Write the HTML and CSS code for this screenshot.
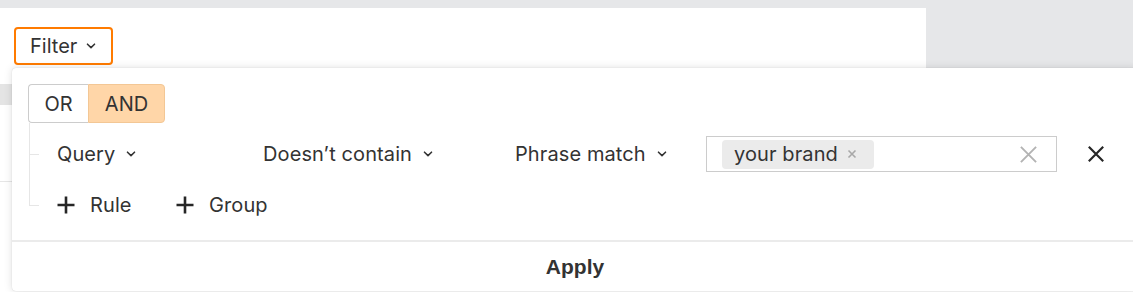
FILE: index.html
```html
<!DOCTYPE html>
<html>
<head>
<meta charset="utf-8">
<link rel="stylesheet" href="styles.css">
</head>
<body>
<div class="topbar">
  <div class="panel">
    <button class="filter-btn">Filter
      <svg class="chev" viewBox="0 0 10 6" width="10" height="6"><path d="M1.5 1.2 L5 4.6 L8.5 1.2" fill="none" stroke="#333" stroke-width="1.6" stroke-linecap="round" stroke-linejoin="round"/></svg>
    </button>
  </div>
</div>
<div class="content">
  <div class="thead"></div>
  <div class="trow"></div>
</div>

<div class="popup">
  <div class="body">
    <div class="seg">
      <span class="seg-item">OR</span>
      <span class="seg-item active">AND</span>
    </div>
    <div class="tree">
      <div class="rule">
        <span class="tick"></span>
        <span class="sel">Query <svg class="chev" viewBox="0 0 10 6" width="10" height="6"><path d="M1.5 1.2 L5 4.6 L8.5 1.2" fill="none" stroke="#333" stroke-width="1.6" stroke-linecap="round" stroke-linejoin="round"/></svg></span>
        <span class="sel">Doesn’t contain <svg class="chev" viewBox="0 0 10 6" width="10" height="6"><path d="M1.5 1.2 L5 4.6 L8.5 1.2" fill="none" stroke="#333" stroke-width="1.6" stroke-linecap="round" stroke-linejoin="round"/></svg></span>
        <span class="sel">Phrase match <svg class="chev" viewBox="0 0 10 6" width="10" height="6"><path d="M1.5 1.2 L5 4.6 L8.5 1.2" fill="none" stroke="#333" stroke-width="1.6" stroke-linecap="round" stroke-linejoin="round"/></svg></span>
        <div class="input">
          <span class="tag">your brand <svg viewBox="0 0 10 10" width="10" height="10"><path d="M1.5 1.5 L8.5 8.5 M8.5 1.5 L1.5 8.5" stroke="#a8a8a8" stroke-width="1.6"/></svg></span>
          <svg class="clear" viewBox="0 0 20 20" width="19" height="19"><path d="M2 2 L18 18 M18 2 L2 18" stroke="#b3b3b3" stroke-width="2"/></svg>
        </div>
        <svg class="close" viewBox="0 0 20 20" width="18" height="18"><path d="M2 2 L18 18 M18 2 L2 18" stroke="#262626" stroke-width="2.4"/></svg>
      </div>
      <div class="actions">
        <span class="tick"></span>
        <span class="add"><svg viewBox="0 0 18 18" width="18" height="18"><path d="M9 0.5 V17.5 M0.5 9 H17.5" stroke="#262626" stroke-width="2.6"/></svg>Rule</span>
        <span class="add"><svg viewBox="0 0 18 18" width="18" height="18"><path d="M9 0.5 V17.5 M0.5 9 H17.5" stroke="#262626" stroke-width="2.6"/></svg>Group</span>
      </div>
    </div>
  </div>
  <div class="footer">Apply</div>
</div>
</body>
</html>
```

FILE: styles.css
```css
* { box-sizing: border-box; }
html, body { margin: 0; padding: 0; }
body {
  width: 1133px;
  height: 292px;
  overflow: hidden;
  background: #ffffff;
  font-family: Inter, "Noto Sans", sans-serif;
  color: #333333;
  position: relative;
}
.topbar {
  background: #e6e7e9;
  padding-top: 8px;
}
.panel {
  width: 926px;
  height: 60px;
  background: #ffffff;
  padding: 19px 0 0 14px;
}
.filter-btn {
  display: flex;
  align-items: center;
  gap: 9px;
  height: 38px;
  width: 99px;
  padding: 0 0 0 14px;
  border: 2px solid #ff7b00;
  border-radius: 4px;
  background: #fff;
  font-family: inherit;
  font-size: 20px;
  color: #333;
}
.content { background: #fff; padding-top: 16px; }
.thead { height: 21px; background: #e4e4e4; }
.trow { height: 77px; border-bottom: 1px solid #e6e6e6; }
.popup {
  position: absolute;
  left: 12px;
  top: 68px;
  width: 1126px;
  height: 223px;
  background: #fff;
  border-radius: 4px;
  box-shadow: 0 0 8px rgba(0,0,0,0.13), 0 0 1px rgba(0,0,0,0.2);
  display: flex;
  flex-direction: column;
}
.body {
  padding: 16px 0 0 16px;
  height: 174px;
  border-bottom: 2px solid #ebebeb;
}
.seg {
  display: inline-flex;
  height: 39px;
  font-size: 20px;
}
.seg-item {
  display: flex;
  align-items: center;
  justify-content: center;
  border: 1px solid #cccccc;
  color: #333;
}
.seg-item:first-child {
  border-radius: 4px 0 0 4px;
  border-right: none;
  width: 60px;
}
.seg-item.active {
  background: #ffd6a8;
  border-color: #f3c795;
  border-radius: 0 4px 4px 0;
  width: 77px;
}
.tree {
  margin-left: 1px;
  position: relative;
}
.tree::before {
  content: "";
  position: absolute;
  left: 0;
  top: 0;
  height: 82px;
  border-left: 1px solid #e6e6e6;
}
.rule, .actions {
  display: grid;
  align-items: center;
  position: relative;
  font-size: 20px;
  letter-spacing: 0.1px;
}
.rule {
  grid-template-columns: 206px 252px 191px 351px 30px 20px;
  padding-left: 28px;
  height: 62px;
}
.actions {
  grid-template-columns: 119px auto;
  padding-left: 28px;
  height: 40px;
}
.tick {
  position: absolute;
  left: 0;
  width: 10px;
  border-top: 1px solid #e6e6e6;
}
.rule .tick { top: 31px; }
.actions .tick { top: 20px; }
.sel { display: flex; align-items: center; gap: 11px; }
.input {
  grid-column: 4;
  height: 36px;
  border: 1px solid #cccccc;
  display: flex;
  align-items: center;
  justify-content: space-between;
  padding: 0 18px 0 15px;
}
.tag {
  display: flex;
  align-items: center;
  gap: 9px;
  height: 29px;
  background: #ebebeb;
  border-radius: 4px;
  padding: 0 17px 0 12px;
  color: #333;
}
.close { grid-column: 6; }
.add { display: flex; align-items: center; gap: 15px; }
.footer {
  flex: 1;
  display: flex;
  align-items: center;
  justify-content: center;
  font-family: "Liberation Sans", Arial, sans-serif;
  font-weight: bold;
  font-size: 21px;
  color: #333;
}
```
